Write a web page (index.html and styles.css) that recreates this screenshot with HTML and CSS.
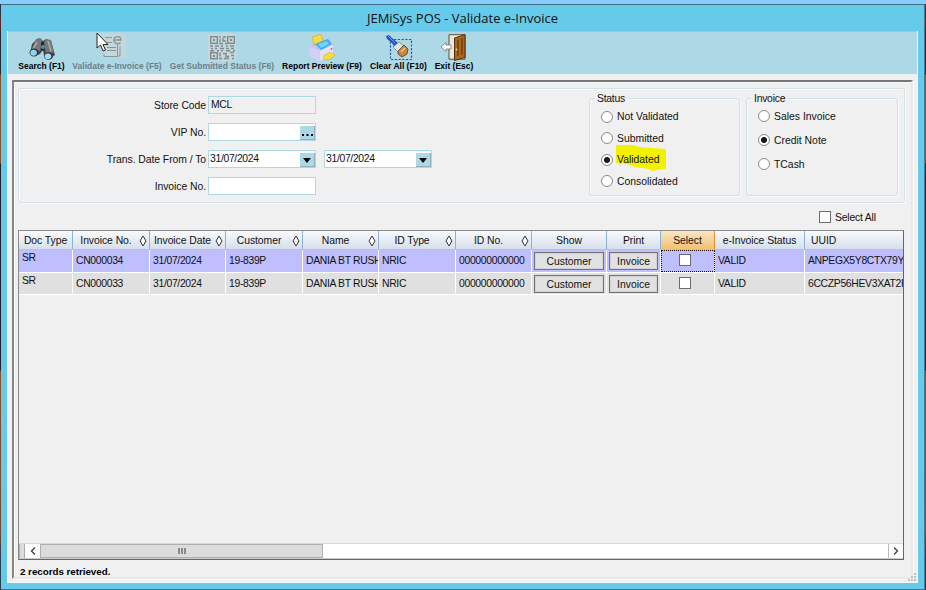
FILE: index.html
```html
<!DOCTYPE html>
<html lang="en">
<head>
<meta charset="UTF-8">
<title>JEMiSys POS - Validate e-Invoice</title>
<link rel="stylesheet" href="styles.css">
</head>
<body>

<div class="window">
  <div class="title">JEMiSys POS - Validate e-Invoice</div>
  <div class="client">

    <div class="toolbar">
      <div class="tool search">
        <svg width="28" height="27" viewBox="0 0 28 27">
          <path d="M8 6l4-2 3 3 3-2 5 2 4 14-6 4-5-3-1-6-3 4-2 1-8-2 2-9z" fill="#4b4b4d"/>
          <path d="M8 5l4-1 2 3-2 10-8-2zM18 5l5 1 3 12-7 2-4-10z" fill="#77777a"/>
          <path d="M9 8l-4 7M20 7l3 10" stroke="#b0b0b2" stroke-width="1.5"/>
          <path d="M13 8h3l1 8-4 1z" fill="#29292b"/>
          <circle cx="15" cy="13" r="2" fill="#3f93ac"/>
          <ellipse cx="6" cy="18.500" rx="4.500" ry="4" fill="#303236"/>
          <ellipse cx="5.600" cy="18.800" rx="3.300" ry="3" fill="#8fd4ef"/>
          <ellipse cx="20.500" cy="22" rx="4.500" ry="3.800" fill="#303236"/>
          <ellipse cx="20" cy="22.300" rx="3.300" ry="2.800" fill="#a5dcf1"/>
        </svg>
        <span>Search (F1)</span>
      </div>
      <div class="tool validate disabled">
        <svg width="28" height="27" viewBox="0 0 28 27">
          <rect x="0" y="0" width="23" height="24" fill="#c6d7dc"/>
          <path d="M2 3.500h7M2 8.500h7M4 13.500h9M4 16.500h9" stroke="#84959b" stroke-width="1.200"/>
          <path d="M1 20V22.500H14.500V10M17 12v10h-3" fill="none" stroke="#84959b"/>
          <path d="M10.500 6H18C18 1.500 11 1.500 11 6s5 4.500 6.500 2.500" fill="none" stroke="#84959b" stroke-width="1.400"/>
        </svg>
        <span>Validate e-Invoice (F5)</span>
      </div>
      <div class="tool submitted disabled">
        <svg width="28" height="27" viewBox="0 0 28 27">
          <rect width="28" height="27" fill="#c6d7dc"/>
          <g fill="none" stroke="#7f8b90" stroke-width="1.400">
            <rect x="2.700" y="2.700" width="6.600" height="6.600"/>
            <rect x="19.700" y="2.700" width="6.600" height="6.600"/>
            <rect x="2.700" y="18.700" width="6.600" height="6"/>
            <path d="M11 3h2m2 0h3M12 5v3m3-4v3h3M11 9.500h4m2 0h2M2 12h3m2 0h4m2 0h2m3 0h2m2 0h4M3 14.500h2m2 0h2m3 0h4m2 0h3m2 0h3M2 16.700h4m3 0h2m2 0h2m3 0h4m3 0h2M12 18.500v4m3-3h3v3h3m1-4h4M11 24.500h3m2 0h3m1-2v3m3-4h3m-2 3h2"/>
          </g>
          <path d="M5 5h2v2H5zM22 5h2v2h-2zM5 21h2v2H5z" fill="#7f8b90"/>
        </svg>
        <span>Get Submitted Status (F6)</span>
      </div>
      <div class="tool report">
        <svg width="28" height="27" viewBox="0 0 28 27">
          <path d="M1 13l7-5 15-3 3 6-1 10-13 6-10-5z" fill="#c7c5f0"/>
          <path d="M1 13l11 4 13-6v9l-13 7-10-5z" fill="#e2e0fb"/>
          <path d="M1 13l11 4v10l-10-5z" fill="#d2cff4"/>
          <path d="M4 3l9-3 2 7-9 4z" fill="#f9d64b" stroke="#d3a32b" stroke-width=".6"/>
          <path d="M7 10l13-5 4 5-11 6z" fill="#38b2e9"/>
          <path d="M10 10l9-3 2 3-8 4z" fill="#75d2f5"/>
          <path d="M15 22l7-4 5 3-6 5-5-1z" fill="#fbdc3d" stroke="#dcb326" stroke-width=".6"/>
          <circle cx="23.500" cy="15" r="1" fill="#e85f57"/>
        </svg>
        <span>Report Preview (F9)</span>
      </div>
      <div class="tool clear">
        <svg width="28" height="27" viewBox="0 0 28 27">
          <rect x="5.500" y="5.500" width="21" height="20" fill="none" stroke="#2c50a8" stroke-width="1.200" stroke-dasharray="2.200 1.500"/>
          <path d="M1 2l3-1 3 3 5 4 2 3-4 3-3-5-5-4z" fill="#1d56bd"/>
          <path d="M3 2l7 7" stroke="#6f9be6"/>
          <path d="M8 13l6-5 5 4-6 6z" fill="#e1e3e6" stroke="#70757d" stroke-width=".7"/>
          <path d="M13 17l6-6 4 4-1 5-5 3-4-3z" fill="#c6893b" stroke="#5f3914" stroke-width=".8"/>
          <path d="M16 18l4-4" stroke="#f0c783" stroke-width="1.500"/>
        </svg>
        <span>Clear All (F10)</span>
      </div>
      <div class="tool exit">
        <svg width="28" height="27" viewBox="0 0 28 27">
          <path d="M9 .700h16v24.500H9z" fill="#e9e9e4" stroke="#6b4a25"/>
          <path d="M14.500 4L25 .500v23l-10.500 3z" fill="#a8671f" stroke="#56300d"/>
          <path d="M17 6l2-.7v16l-2 .7zM21 4.500l2-.7v16.500l-2 .7z" fill="#80470f"/>
          <circle cx="16.500" cy="15.500" r=".9" fill="#f3d574"/>
          <path d="M1 13l5-4.500v2.500h5v4H6v2.500z" fill="#fff" stroke="#777" stroke-width=".8"/>
        </svg>
        <span>Exit (Esc)</span>
      </div>
    </div>

    <div class="panel">
      <div class="filters">
        <div class="fields">
          <label>Store Code</label><div class="field readonly">MCL</div>
          <label>VIP No.</label><div class="field"><b class="pick dots"><svg width="11" height="2"><path d="M0 0h2v2H0zM4.500 0h2v2h-2zM9 0h2v2H9z"/></svg></b></div>
          <label>Trans. Date From / To</label>
          <div class="dates">
            <div class="field date">31/07/2024<b class="pick"><svg width="8" height="5"><path d="M0 0h8L4 5z"/></svg></b></div>
            <div class="field date">31/07/2024<b class="pick"><svg width="8" height="5"><path d="M0 0h8L4 5z"/></svg></b></div>
          </div>
          <label>Invoice No.</label><div class="field"></div>
        </div>
        <div class="group status">
          <span class="legend">Status</span>
          <div class="option"><i class="radio"></i>Not Validated</div>
          <div class="option"><i class="radio"></i>Submitted</div>
          <div class="option">
            <svg class="marker" width="50" height="27"><path d="M0 0h18l5 2 27 2v20l-9 1-5 1-3-2-14-2-8-3-11-1z" fill="#f2f200"/></svg>
            <i class="radio on"></i><span class="front">Validated</span>
          </div>
          <div class="option"><i class="radio"></i>Consolidated</div>
        </div>
        <div class="group invoice">
          <span class="legend">Invoice</span>
          <div class="option"><i class="radio"></i>Sales Invoice</div>
          <div class="option"><i class="radio on"></i>Credit Note</div>
          <div class="option"><i class="radio"></i>TCash</div>
        </div>
      </div>

      <div class="select-all"><i class="check"></i>Select All</div>

      <div class="grid">
        <div class="row head">
          <div><span>Doc Type</span></div>
          <div><span>Invoice No.</span><svg class="sort" width="8" height="12"><path d="M4 1l3 5-3 5-3-5z"/></svg></div>
          <div><span>Invoice Date</span><svg class="sort" width="8" height="12"><path d="M4 1l3 5-3 5-3-5z"/></svg></div>
          <div><span>Customer</span><svg class="sort" width="8" height="12"><path d="M4 1l3 5-3 5-3-5z"/></svg></div>
          <div><span>Name</span><svg class="sort" width="8" height="12"><path d="M4 1l3 5-3 5-3-5z"/></svg></div>
          <div><span>ID Type</span><svg class="sort" width="8" height="12"><path d="M4 1l3 5-3 5-3-5z"/></svg></div>
          <div><span>ID No.</span><svg class="sort" width="8" height="12"><path d="M4 1l3 5-3 5-3-5z"/></svg></div>
          <div><span>Show</span></div>
          <div><span>Print</span></div>
          <div class="active"><span>Select</span></div>
          <div><span>e-Invoice Status</span></div>
          <div class="uuid"><span>UUID</span></div>
        </div>
        <div class="row selected">
          <div class="doc">SR</div>
          <div>CN000034</div>
          <div>31/07/2024</div>
          <div>19-839P</div>
          <div>DANIA BT RUSH</div>
          <div>NRIC</div>
          <div>000000000000</div>
          <div class="action"><button>Customer</button></div>
          <div class="action"><button>Invoice</button></div>
          <div class="pickcell focus"><i class="check"></i></div>
          <div>VALID</div>
          <div>ANPEGX5Y8CTX79Y0</div>
        </div>
        <div class="row">
          <div class="doc">SR</div>
          <div>CN000033</div>
          <div>31/07/2024</div>
          <div>19-839P</div>
          <div>DANIA BT RUSH</div>
          <div>NRIC</div>
          <div>000000000000</div>
          <div class="action"><button>Customer</button></div>
          <div class="action"><button>Invoice</button></div>
          <div class="pickcell"><i class="check"></i></div>
          <div>VALID</div>
          <div>6CCZP56HEV3XAT2K</div>
        </div>
        <div class="scrollbar">
          <div class="split"></div>
          <div class="arrow"><svg width="6" height="8"><path d="M5 .500L1.500 4 5 7.500"/></svg></div>
          <div class="thumb"><svg width="8" height="6"><path d="M1 0v6M4 0v6M7 0v6"/></svg></div>
          <div class="track"></div>
          <div class="arrow right"><svg width="6" height="8"><path d="M1 .500L4.500 4 1 7.500"/></svg></div>
        </div>
      </div>

      <div class="message">2 records retrieved.</div>
    </div>
    <svg class="grip" width="8" height="8"><path d="M6 0h2v2H6zM3 3h2v2H3zM6 3h2v2H6zM0 6h2v2H0zM3 6h2v2H3zM6 6h2v2H6z" fill="#bdbdbd"/></svg>
  </div>
</div>

<svg class="cursor" width="13" height="20"><path d="M1 1v15l3.500-3 2.500 6 2.500-1-2.500-5.500h5z" fill="#fff" stroke="#222"/></svg>

</body>
</html>
```
FILE: styles.css
```css
* {
  box-sizing: border-box;
}
body {
  margin: 0;
  width: 926px;
  height: 590px;
  overflow: hidden;
  padding: 4px 1px 0;
  background: linear-gradient(#8accfb 4px, #2b3440 4px, #2b3440 18px, #7c2430 19px, #31242a 35px, #2b2a30 74px, #8d4f24 75px, #8d4f24 163px, #20252b 164px, #20252b 370px, #8d4f24 371px, #7d4828 530px, #27414f 560px);
  font-family: "Liberation Sans", Arial, sans-serif;
  font-size: 10.4px;
  letter-spacing: -.33px;
  color: #111;
}
.window {
  height: 586px;
  background: #66caea;
  border-top: 1px solid #3c7288;
  border-bottom: 1px solid #337c9e;
  border-right: 1px solid #3c7f98;
  display: flex;
  flex-direction: column;
}
.title {
  height: 26px;
  line-height: 26px;
  text-align: center;
  font-family: "Open Sans", "Noto Sans", sans-serif;
  font-size: 13px;
  letter-spacing: 0;
}
.client {
  position: relative;
  width: 911px;
  height: 552px;
  margin-left: 6px;
  background: #f0f0f0;
  border: solid #f8f8f8;
  border-width: 0 1px 1px;
}
.toolbar {
  height: 43px;
  background: #add8e6;
  border-top: 1px solid #99c9dc;
  display: flex;
  gap: 8px;
  padding: 2px 0 0 11px;
}
.tool {
  display: flex;
  flex-direction: column;
  align-items: center;
  font-size: 8.5px;
  font-weight: bold;
  letter-spacing: 0;
  line-height: 11px;
  white-space: nowrap;
  color: #000;
}
.tool svg {
  flex: none;
}
.tool.disabled {
  color: #6e7f86;
}
.search { width: 45px; }
.validate { width: 90px; }
.submitted { width: 104px; }
.report { width: 80px; }
.clear { width: 57px; }
.exit { width: 38px; }

.panel {
  width: 901px;
  height: 499px;
  margin: 6px 0 0 4px;
  border-style: solid;
  border-width: 2px;
  border-color: #777 #e8e8e8 #e8e8e8 #858585;
  box-shadow: inset 1px 1px #fafafa, 1px 1px #fbfbfb;
  padding: 6px 0 0 4px;
}
.filters {
  width: 887px;
  height: 115px;
  border: 1px solid #d3e1e8;
  border-radius: 3px;
  box-shadow: inset 1px 1px #fafafa, 1px 1px #fafafa;
  display: flex;
}
.fields {
  width: 570px;
  padding-top: 7px;
  display: grid;
  grid-template-columns: 187px 224px;
  grid-auto-rows: 18px;
  row-gap: 9px;
  column-gap: 2px;
}
.fields label {
  text-align: right;
  line-height: 19px;
  letter-spacing: -.06px;
}
.field {
  position: relative;
  width: 108px;
  height: 18px;
  border: 1px solid #add8e6;
  background: #fff;
  padding-left: 2px;
  line-height: 15px;
}
.field.readonly {
  background: #f0f0f0;
}
.field.date {
  padding-left: 1px;
}
.dates {
  display: flex;
  gap: 8px;
}
.pick {
  position: absolute;
  right: 0;
  top: 2px;
  width: 15px;
  height: 14px;
  background: #add8e6;
  border: solid #8fb0bc;
  border-width: 0 1px 1px 0;
  display: flex;
  align-items: center;
  justify-content: center;
  padding-top: 1px;
}
.pick.dots {
  padding-top: 5px;
}
.group {
  position: relative;
  height: 98px;
  margin-top: 9px;
  border: 1px solid #cfdfe7;
  border-radius: 3px;
  box-shadow: inset 1px 1px #fafafa, 1px 1px #fafafa;
  letter-spacing: 0;
}
.status {
  width: 151px;
  padding: 7px 0 0 11px;
}
.invoice {
  width: 152px;
  margin-left: 6px;
  padding: 5px 0 0 11px;
}
.legend {
  position: absolute;
  left: 4px;
  top: -6px;
  padding: 0 3px;
  line-height: 12px;
  letter-spacing: -.25px;
  background: #f0f0f0;
}
.option {
  position: relative;
  height: 21.5px;
  display: flex;
  align-items: center;
  gap: 4px;
}
.invoice .option {
  height: 24.2px;
}
.radio {
  width: 12px;
  height: 12px;
  border: 1px solid #8a8a8a;
  border-radius: 50%;
  background: #fff;
}
.radio.on {
  background: radial-gradient(circle, #1c1c1c 2.7px, #fff 3.3px);
}
.marker {
  position: absolute;
  left: 15px;
  top: -4px;
}
.front {
  position: relative;
}
.select-all {
  height: 27px;
  margin-left: 801px;
  padding-top: 1px;
  display: flex;
  align-items: center;
  gap: 4px;
  letter-spacing: -.2px;
}
.check {
  width: 12px;
  height: 12px;
  border: 1px solid #6c6c6c;
  background: #fff;
}

.grid {
  width: 886px;
  height: 330px;
  border: 1px solid #8b8b8b;
  border-right-color: #666;
  border-bottom-color: #666;
  display: flex;
  flex-direction: column;
}
.row {
  display: grid;
  grid-template-columns: 54px 77px 76px 77px 76px 77px 76px 75px 54px 54px 90px 98px;
  height: 22.5px;
  background: #e0e0e0;
  border-bottom: 1px solid #fff;
}
.row > div {
  overflow: hidden;
  white-space: nowrap;
  padding-left: 3px;
  line-height: 22px;
  border-right: 1px solid #fff;
}
.row > div:last-child {
  border-right: 0;
}
.row .doc {
  line-height: 15px;
}
.row.selected {
  background: #bfbfff;
}
.row.head {
  height: 19px;
  background: linear-gradient(#f8fafd, #e4eaf3 60%, #d5deea);
  border-bottom: 1px solid #b5c5d6;
}
.head > div {
  display: flex;
  align-items: center;
  padding: 2px 0 0;
  border-right-color: #8db2d0;
  letter-spacing: -.06px;
}
.head span {
  flex: 1;
  text-align: center;
}
.head .uuid span {
  text-align: left;
  padding-left: 6px;
}
.head > .active {
  background: linear-gradient(#fae7c3, #f3c172);
  border-right: 1px solid #ef8c21;
}
.sort {
  margin-right: 2px;
  fill: #fff;
  stroke: #333;
  flex: none;
}
.row > .action {
  padding: 2px 2px 2px 2px;
  display: flex;
}
.action button {
  width: 100%;
  height: 18px;
  padding: 0;
  border: 1px solid #747474;
  background: #e1e1e1;
  box-shadow: inset 0 0 0 1px #d2d2d2;
  font: inherit;
  line-height: 17px;
  letter-spacing: 0;
  color: #111;
}
.row > .pickcell {
  display: flex;
  justify-content: center;
  padding: 4px 5px 0 0;
}
.row > .focus {
  outline: 1px dotted #111;
  outline-offset: -1px;
}

.scrollbar {
  margin-top: auto;
  height: 16px;
  display: flex;
  background: #fff;
  border-top: 1px solid #d8d8d8;
  border-bottom: 1px solid #ccc;
}
.split {
  width: 6px;
  background: #ddd;
  border: 1px solid #aaa;
  border-width: 0 1px;
}
.arrow {
  width: 15px;
  display: flex;
  align-items: center;
  justify-content: center;
}
.arrow path {
  fill: none;
  stroke: #444;
  stroke-width: 1.4;
}
.arrow.right {
  border-left: 1px solid #bbb;
}
.thumb {
  width: 283px;
  background: #dcdcdc;
  border: 1px solid #b0b0b0;
  display: flex;
  align-items: center;
  justify-content: center;
}
.thumb path {
  stroke: #555;
  stroke-width: 1.2;
}
.track {
  flex: 1;
}
.message {
  padding: 6px 0 0 2px;
  font-size: 9.8px;
  line-height: 12px;
  letter-spacing: -.03px;
  font-weight: bold;
  color: #000;
}
.grip {
  position: absolute;
  right: 1px;
  bottom: 1px;
}
.cursor {
  position: absolute;
  left: 96px;
  top: 32px;
}
```
